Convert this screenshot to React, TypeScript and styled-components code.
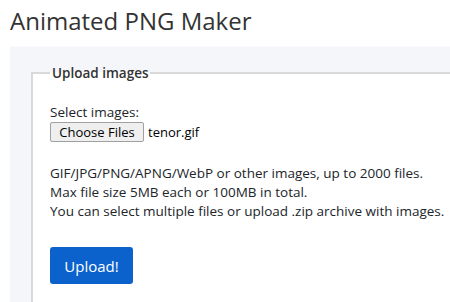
import styled, { createGlobalStyle } from 'styled-components';

const GlobalStyle = createGlobalStyle`
  html, body {
    margin: 0;
    padding: 0;
    background: #ffffff;
    overflow: hidden;
  }
  body {
    font-family: 'Open Sans', 'Noto Sans', sans-serif;
    color: #212529;
  }
`;

const INFO_LINES = [
  'GIF/JPG/PNG/APNG/WebP or other images, up to 2000 files.',
  'Max file size 5MB each or 100MB in total.',
  'You can select multiple files or upload .zip archive with images.',
];

export default function App() {
  return (
    <>
      <GlobalStyle />
      <PageStyle>
        <TitleStyle>Animated PNG Maker</TitleStyle>
        <PanelStyle>
          <FieldsetStyle>
            <LegendStyle>Upload images</LegendStyle>
            <LabelStyle>Select images:</LabelStyle>
            <FileRowStyle>
              <FileButtonStyle type="button">Choose Files</FileButtonStyle>
              <FileNameStyle>tenor.gif</FileNameStyle>
            </FileRowStyle>
            <InfoStyle>
              {INFO_LINES.map(line => (
                <div key={line}>{line}</div>
              ))}
            </InfoStyle>
            <UploadButtonStyle type="button">Upload!</UploadButtonStyle>
          </FieldsetStyle>
        </PanelStyle>
      </PageStyle>
    </>
  );
}

const PageStyle = styled.div`
  padding-left: 10px;
  width: 440px;
  height: 302px;
  overflow: hidden;
`;

const TitleStyle = styled.h1`
  margin: 0;
  padding-top: 6px;
  height: 40px;
  font-size: 24px;
  font-weight: 400;
  line-height: 30px;
  color: #333;
`;

const PanelStyle = styled.div`
  background: #f5f6fa;
  border-top: 1px solid #fbfbfd;
  padding: 17px 0 0 21px;
  height: 260px;
`;

const FieldsetStyle = styled.fieldset`
  margin: 0;
  height: 100%;
  padding: 8px 0 0 17px;
  background: #fff;
  border: 2px solid #d9d9d9;
  border-right: none;
  border-bottom: none;
  white-space: nowrap;
`;

const LegendStyle = styled.legend`
  padding: 0 2px;
  font-size: 13.5px;
  font-weight: 600;
  color: #333;
`;

const LabelStyle = styled.div`
  margin-top: 13px;
  font-size: 13.5px;
  line-height: 19px;
`;

const FileRowStyle = styled.div`
  display: flex;
  align-items: center;
  gap: 4px;
`;

const FileButtonStyle = styled.button`
  width: 94px;
  height: 20px;
  padding: 0;
  font-family: 'Open Sans', sans-serif;
  font-size: 13px;
  color: #000;
  background: #efefef;
  border: 1px solid #a0a0a0;
  border-radius: 2px;
`;

const FileNameStyle = styled.span`
  font-size: 13px;
  color: #000;
`;

const InfoStyle = styled.div`
  margin-top: 22px;
  font-size: 13.5px;
  line-height: 19px;
`;

const UploadButtonStyle = styled.button`
  margin-top: 26px;
  width: 83px;
  height: 37px;
  padding: 0;
  font-family: 'Open Sans', sans-serif;
  font-size: 15px;
  color: #fff;
  background: #0b62cc;
  border: none;
  border-radius: 3px;
`;
